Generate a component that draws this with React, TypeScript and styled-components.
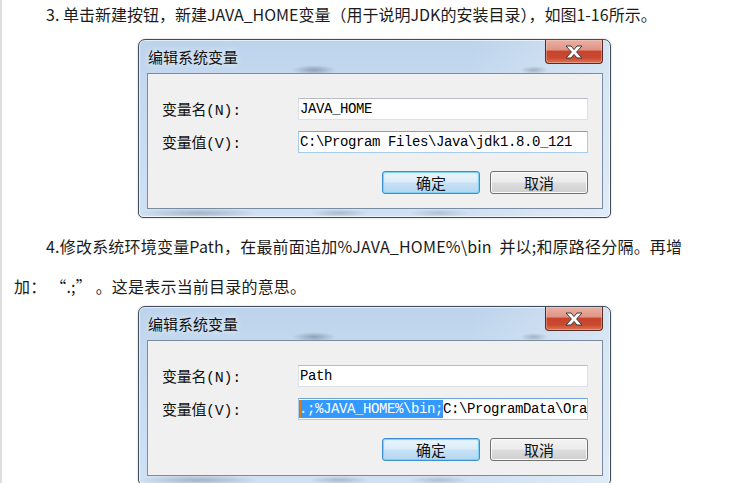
import React from 'react';
import styled, { createGlobalStyle } from 'styled-components';

const GlobalStyle = createGlobalStyle`
  html, body { margin: 0; padding: 0; background: #ffffff; }
  body { width: 740px; height: 483px; overflow: hidden; }
`;

const Page = styled.div`
  width: 740px;
  height: 483px;
  box-sizing: border-box;
  border-left: 2px solid #dedede;
  font-family: "Noto Sans CJK SC", sans-serif;
  color: #1b1b1b;
  display: flex;
  flex-direction: column;
  overflow: hidden;
`;

const Para = styled.p<{ $lh: number; $ls?: number }>`
  margin: 0;
  padding-left: 12px;
  text-indent: 32px;
  font-size: 16px;
  line-height: ${p => p.$lh}px;
  letter-spacing: ${p => p.$ls ?? 0}px;
  white-space: nowrap;
`;

const Figure = styled.div<{ $top: number }>`
  display: flex;
  padding-left: 136px;
  margin-top: ${p => p.$top}px;
`;

const Window = styled.div`
  width: 473px;
  height: 179px;
  box-sizing: border-box;
  border: 1px solid #404c5a;
  border-radius: 7px 7px 5px 5px;
  padding: 0 7px 8px 8px;
  display: flex;
  flex-direction: column;
  background:
    radial-gradient(ellipse 22px 5px at 175px 30px, rgba(80, 95, 115, 0.45), transparent),
    radial-gradient(ellipse 14px 4px at 395px 30px, rgba(80, 95, 115, 0.35), transparent),
    radial-gradient(ellipse 60px 5px at 60px 173px, rgba(80, 95, 115, 0.35), transparent),
    radial-gradient(ellipse 30px 4px at 200px 173px, rgba(80, 95, 115, 0.3), transparent),
    radial-gradient(ellipse 30px 4px at 300px 173px, rgba(80, 95, 115, 0.25), transparent),
    linear-gradient(to right, rgba(255,255,255,0) 70%, rgba(255,255,255,0.35) 100%),
    linear-gradient(to bottom, #bcd3ec 0%, #c3d8ee 18%, #c9dcf1 60%, #d0e1f3 100%);
  box-shadow: inset 0 0 0 1px rgba(255, 255, 255, 0.6), 0 0 2px rgba(0, 0, 0, 0.25);
`;

const TitleBar = styled.div`
  height: 33px;
  display: flex;
  justify-content: space-between;
  align-items: flex-start;
`;

const TitleText = styled.span`
  font-family: "Noto Sans CJK SC", sans-serif;
  font-size: 15px;
  line-height: 34px;
  padding-left: 1px;
  color: #101010;
  text-shadow: 0 0 6px rgba(255, 255, 255, 0.9);
`;

const CloseButton = styled.div`
  width: 58px;
  height: 24px;
  box-sizing: border-box;
  border: 1px solid #5a2b24;
  border-top: none;
  border-radius: 0 0 4px 4px;
  display: flex;
  align-items: center;
  justify-content: center;
  background: linear-gradient(to bottom, #eab0a3 0%, #df9686 42%, #c8442c 50%, #c84a31 78%, #de7657 100%);
  box-shadow: inset 0 0 0 1px rgba(255, 220, 210, 0.35);
`;

const Client = styled.div`
  height: 136px;
  box-sizing: border-box;
  border: 1px solid #7a8ca2;
  background: #f0f0f0;
  padding: 24px 14px 0 14px;
  display: flex;
  flex-direction: column;
`;

const FieldGrid = styled.div`
  display: grid;
  grid-template-columns: 136px 290px;
  grid-auto-rows: 22px;
  row-gap: 11px;
  align-items: center;
`;

const Label = styled.span`
  font-family: "Liberation Mono", "Noto Sans CJK SC", monospace;
  font-size: 15px;
  letter-spacing: -0.3px;
  color: #111;
  white-space: nowrap;
`;

const TextBox = styled.div<{ $focus?: boolean }>`
  height: 22px;
  box-sizing: border-box;
  background: #ffffff;
  border: 1px solid ${p => (p.$focus ? '#a8cbea' : '#dde1e7')};
  border-top-color: ${p => (p.$focus ? '#6fa4d6' : '#b9bcc2')};
  padding-left: 1px;
  display: flex;
  align-items: center;
  overflow: hidden;
  white-space: pre;
  font-family: "Liberation Mono", monospace;
  font-size: 14px;
  letter-spacing: -0.4px;
  color: #000;
`;

const Selected = styled.span`
  background: #3399ff;
  color: #ffffff;
  line-height: 18px;
  height: 18px;
  display: inline-block;
`;

const Caret = styled.span`
  display: inline-block;
  width: 2px;
  height: 18px;
  background: #e07b1a;
  margin-right: -2px;
  position: relative;
  z-index: 1;
`;

const ButtonRow = styled.div`
  display: flex;
  justify-content: flex-end;
  gap: 10px;
  margin-top: 18px;
`;

const Button = styled.div<{ $default?: boolean }>`
  width: 98px;
  height: 23px;
  box-sizing: border-box;
  border-radius: 3px;
  display: flex;
  align-items: center;
  justify-content: center;
  font-family: "Noto Sans CJK SC", sans-serif;
  font-size: 15px;
  color: #111;
  border: 1px solid ${p => (p.$default ? '#3c8fd0' : '#707070')};
  background: ${p =>
    p.$default
      ? 'linear-gradient(to bottom, #eaf5fc 0%, #dcecf8 48%, #c5e1f6 52%, #b6d7f1 100%)'
      : 'linear-gradient(to bottom, #f3f3f3 0%, #ebebeb 48%, #dddddd 52%, #cfcfcf 100%)'};
  box-shadow: ${p =>
    p.$default
      ? 'inset 0 0 0 1px #7fd0f5, inset 0 0 3px #9fdcf8'
      : 'inset 0 0 0 1px #fbfbfb'};
`;

const CloseGlyph = () => (
  <svg width="18" height="14" viewBox="0 0 18 14">
    <polygon
      points="1,1 6,1 9,4.6 12,1 17,1 11.6,7 17,13 12,13 9,9.4 6,13 1,13 6.4,7"
      fill="#ffffff"
      stroke="#3a3a3a"
      strokeWidth="1"
      strokeLinejoin="round"
    />
  </svg>
);

type DialogProps = {
  name: string;
  value: React.ReactNode;
};

const Dialog = ({ name, value }: DialogProps) => (
  <Window>
    <TitleBar>
      <TitleText>编辑系统变量</TitleText>
      <CloseButton>
        <CloseGlyph />
      </CloseButton>
    </TitleBar>
    <Client>
      <FieldGrid>
        <Label>变量名(N):</Label>
        <TextBox>{name}</TextBox>
        <Label>变量值(V):</Label>
        <TextBox $focus>{value}</TextBox>
      </FieldGrid>
      <ButtonRow>
        <Button $default>确定</Button>
        <Button>取消</Button>
      </ButtonRow>
    </Client>
  </Window>
);

export default function App() {
  return (
    <>
      <GlobalStyle />
      <Page>
        <Para $lh={28}>3. 单击新建按钮，新建JAVA_HOME变量（用于说明JDK的安装目录），如图1-16所示。</Para>
        <Figure $top={11}>
          <Dialog name="JAVA_HOME" value={'C:\\Program Files\\Java\\jdk1.8.0_121'} />
        </Figure>
        <Para $lh={40} $ls={0.2} style={{ marginTop: 8 }}>
          4.修改系统环境变量Path，在最前面追加%JAVA_HOME%\bin&nbsp;&nbsp;并以;和原路径分隔。再增
          <br />
          加： “.;” 。这是表示当前目录的意思。
        </Para>
        <Figure $top={0}>
          <Dialog
            name="Path"
            value={
              <>
                <Caret />
                <Selected>{'.;%JAVA_HOME%\\bin;'}</Selected>
                {'C:\\ProgramData\\Ora'}
              </>
            }
          />
        </Figure>
      </Page>
    </>
  );
}
